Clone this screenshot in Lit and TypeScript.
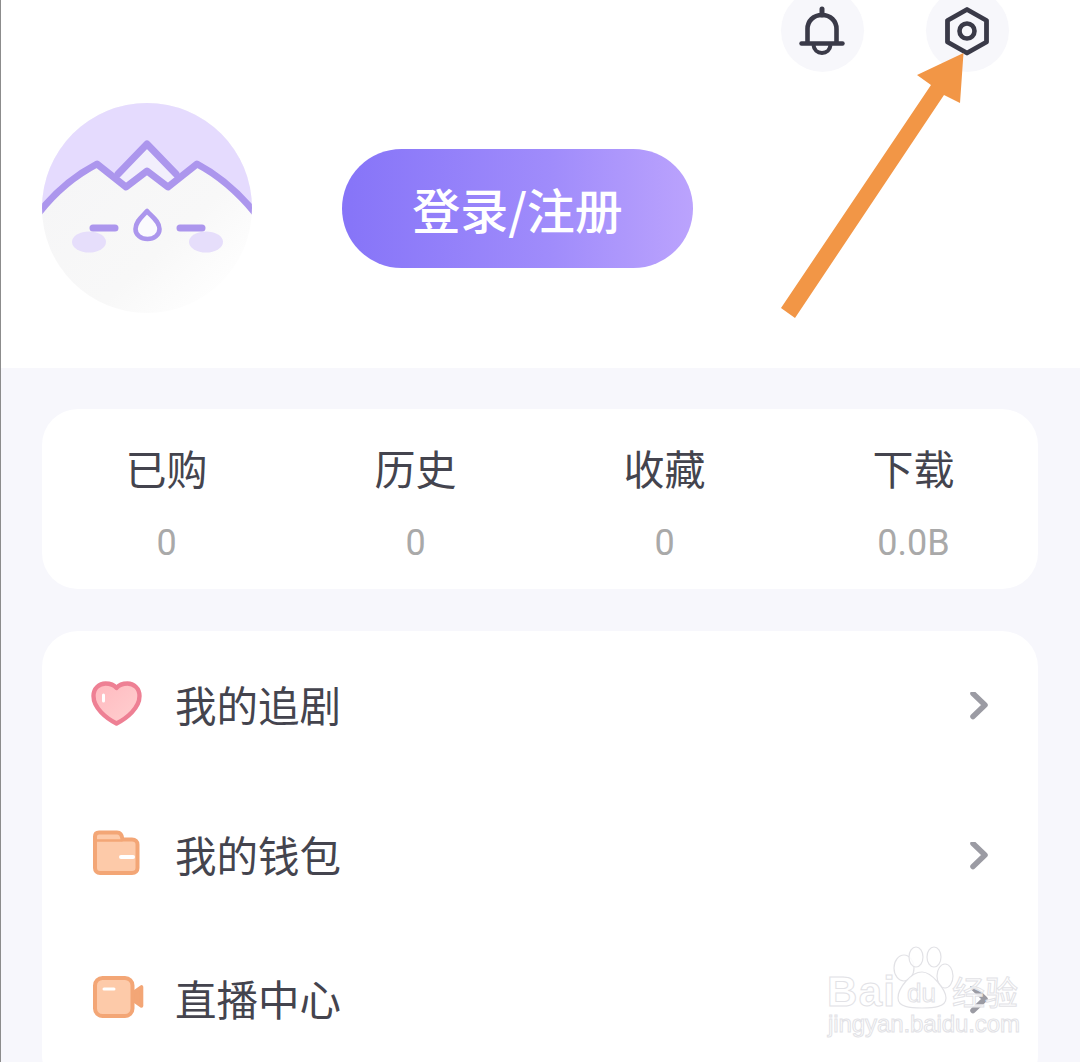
import { LitElement, html, css, svg } from "lit";
import { customElement } from "lit/decorators.js";

const stats = [
  { label: "已购", value: "0" },
  { label: "历史", value: "0" },
  { label: "收藏", value: "0" },
  { label: "下载", value: "0.0B" },
];

const heart = svg`<svg class="ic" viewBox="88 677 60 60">
  <defs>
    <linearGradient id="hg" x1="0" y1="0" x2="1" y2="1">
      <stop offset="0" stop-color="#ffb9bf"/>
      <stop offset="1" stop-color="#ffd0d0"/>
    </linearGradient>
  </defs>
  <path d="M116.500 723.500C106 718 93.500 708 93.500 696C93.500 688 99.500 683.500 105.500 683.500C110.500 683.500 114.500 685.500 116.500 688C118.500 685.500 122.500 683.500 127.500 683.500C133.500 683.500 139.500 688 139.500 696C139.500 708 127 718 116.500 723.500Z" fill="url(#hg)" stroke="#ee8094" stroke-width="4.400" stroke-linejoin="round"/>
  <path d="M103.500 695V701" stroke="#fff" stroke-width="3" stroke-linecap="round" fill="none"/>
</svg>`;

const wallet = svg`<svg class="ic" viewBox="88 827 60 60">
  <path d="M95 868V836.500C95 834 96.500 832.500 99 832.500H117C120 832.500 122 834.500 122.500 839.500H132C135.500 839.500 137.500 841.500 137.500 844.500V868C137.500 871 135.500 873 132 873H100C97 873 95 871 95 868Z" fill="#fdcaa9" stroke="#f3a676" stroke-width="4" stroke-linejoin="round"/>
  <path d="M95 840.500H122.500" stroke="#f3a676" stroke-width="2.500" fill="none"/>
  <path d="M121 857H133" stroke="#fff" stroke-width="4" stroke-linecap="round" fill="none"/>
</svg>`;

const video = svg`<svg class="ic" viewBox="88 971 60 60">
  <path d="M133 993L141.500 987V1006L133 1000Z" fill="#f3a676" stroke="#f3a676" stroke-width="3.600" stroke-linejoin="round"/>
  <rect x="95" y="978" width="37.500" height="38" rx="7.500" fill="#fdcaa9" stroke="#f3a676" stroke-width="4"/>
  <path d="M104 989H114" stroke="#fff" stroke-width="3" stroke-linecap="round" fill="none"/>
</svg>`;

const rows = [
  { label: "我的追剧", icon: heart },
  { label: "我的钱包", icon: wallet },
  { label: "直播中心", icon: video },
];

@customElement("app-root")
export class AppRoot extends LitElement {
  static styles = css`
    :host {
      display: block;
      position: relative;
      width: 1080px;
      height: 1062px;
      overflow: hidden;
      background: #f7f7fc;
      font-family: "Noto Sans CJK SC", "Noto Sans", sans-serif;
      color: #44444e;
    }
    .edge {
      position: absolute;
      left: 0;
      top: 0;
      bottom: 0;
      width: 1px;
      background: #8c8c8c;
    }
    .header {
      height: 368px;
      background: #fff;
      overflow: hidden;
    }
    .actions {
      display: flex;
      justify-content: flex-end;
      gap: 62px;
      padding-right: 71px;
      margin-top: -11px;
    }
    .circle {
      width: 83px;
      height: 83px;
      border-radius: 50%;
      background: #f7f7fb;
      display: flex;
      align-items: center;
      justify-content: center;
    }
    .circle svg {
      width: 60px;
      height: 60px;
    }
    .hero {
      display: flex;
      align-items: center;
      gap: 90px;
      padding-left: 42px;
      margin-top: 31px;
    }
    .avatar {
      width: 210px;
      height: 210px;
      flex: none;
    }
    .login {
      width: 351px;
      height: 119px;
      border-radius: 60px;
      background: linear-gradient(90deg, #8674f8 0%, #a08cfb 60%, #bba3fd 100%);
      color: #fff;
      font-size: 48px;
      font-weight: 500;
      line-height: 119px;
      text-align: center;
      margin-top: 1px;
    }
    .stats {
      margin: 41px 42px 0;
      height: 180px;
      background: #fff;
      border-radius: 36px;
      display: grid;
      grid-template-columns: repeat(4, 1fr);
    }
    .stat {
      display: flex;
      flex-direction: column;
      align-items: center;
    }
    .stat-label {
      font-size: 41px;
      line-height: 60px;
      margin-top: 28px;
    }
    .stat-value {
      font-family: Roboto, "Liberation Sans", sans-serif;
      font-size: 36px;
      line-height: 44px;
      color: #a9a9a9;
      margin-top: 24px;
    }
    .menu {
      margin: 42px 42px 0;
      background: #fff;
      border-radius: 36px;
      height: 460px;
    }
    .row {
      display: flex;
      align-items: center;
      padding: 0 49px 0 46px;
    }
    .row:nth-child(1) { height: 152px; }
    .row:nth-child(2) { height: 148px; }
    .row:nth-child(3) { height: 140px; }
    .ic {
      width: 60px;
      height: 60px;
      flex: none;
      overflow: visible;
    }
    .row-label {
      flex: 1;
      margin: 0 0 6px 27px;
      font-size: 41.500px;
      line-height: 60px;
    }
    .chev {
      width: 20px;
      height: 30px;
      flex: none;
    }
    .arrow {
      position: absolute;
      left: 770px;
      top: 40px;
      width: 210px;
      height: 290px;
    }
    .wm {
      position: absolute;
      left: 820px;
      top: 940px;
      width: 210px;
      height: 105px;
    }
    .wm text {
      fill: #fff;
      fill-opacity: 0.85;
      stroke: #e2e2e6;
      stroke-width: 1;
    }
    .wm .lat {
      font-family: "Liberation Sans", sans-serif;
    }
  `;

  render() {
    return html`
      <div class="edge"></div>
      <section class="header">
        <div class="actions">
          <div class="circle">
            <svg viewBox="792.500 1 60 60">
              <path d="M807 43V29C807 21 813 15 821.500 15C830 15 836 21 836 29V43" fill="none" stroke="#3a3a48" stroke-width="4.600"/>
              <path d="M801 43.500H842" fill="none" stroke="#3a3a48" stroke-width="4.400" stroke-linecap="round"/>
              <path d="M813 45C813.500 50 817 53 821.500 53C826 53 829.500 50 830 45" fill="none" stroke="#3a3a48" stroke-width="4"/>
              <path d="M821.500 9V15" stroke="#3a3a48" stroke-width="5" stroke-linecap="round" fill="none"/>
            </svg>
          </div>
          <div class="circle">
            <svg viewBox="937.500 1 60 60">
              <path d="M966.500 9.500L986 20.500V42L966.500 53L947 42V20.500Z" fill="none" stroke="#3a3a48" stroke-width="4.800" stroke-linejoin="round"/>
              <circle cx="966.500" cy="31" r="7.500" fill="none" stroke="#3a3a48" stroke-width="4.600"/>
            </svg>
          </div>
        </div>
        <div class="hero">
          <svg class="avatar" viewBox="42 103 210 210">
            <defs>
              <clipPath id="disc"><circle cx="147" cy="208" r="105"/></clipPath>
              <linearGradient id="face" x1="0.150" y1="0.300" x2="0.800" y2="1">
                <stop offset="0" stop-color="#f6f6f7"/>
                <stop offset="0.600" stop-color="#f8f8f8"/>
                <stop offset="1" stop-color="#ffffff"/>
              </linearGradient>
            </defs>
            <g clip-path="url(#disc)">
              <rect x="42" y="103" width="210" height="210" fill="url(#face)"/>
              <path d="M38 214C55 192 76 175 97 164L126 187L147 171L168 187L197 164C218 175 238 192 256 214V100H38Z" fill="#e5dbfe"/>
              <path d="M120 178L147 146L175 178L168 187L147 171L126 187Z" fill="#f2effc"/>
              <path d="M38 214C55 192 76 175 97 164L126 187L147 171L168 187L197 164C218 175 238 192 256 214" fill="none" stroke="#ac96ed" stroke-width="7" stroke-linejoin="round"/>
              <path d="M118 174L147 144L176 174" fill="none" stroke="#ac96ed" stroke-width="7" stroke-linejoin="round" stroke-linecap="round"/>
              <ellipse cx="89" cy="242" rx="17" ry="10.500" fill="#e6defb"/>
              <ellipse cx="206" cy="242" rx="17" ry="10.500" fill="#e6defb"/>
              <path d="M93 228H115M180 228H202" stroke="#ac96ed" stroke-width="7" stroke-linecap="round" fill="none"/>
              <path d="M147 211C143 216 135.500 221 135.500 229C135.500 235 141 239 147.500 239C154 239 159.500 235 159.500 229C159.500 221 151 216 147 211Z" fill="#fbfafe" stroke="#ac96ed" stroke-width="4.600" stroke-linejoin="round"/>
            </g>
          </svg>
          <div class="login">登录/注册</div>
        </div>
      </section>

      <section class="stats">
        ${stats.map(
          (s) => html`<div class="stat">
            <div class="stat-label">${s.label}</div>
            <div class="stat-value">${s.value}</div>
          </div>`
        )}
      </section>

      <section class="menu">
        ${rows.map(
          (r) => html`<div class="row">
            ${r.icon}
            <div class="row-label">${r.label}</div>
            <svg class="chev" viewBox="969 692 20 30">
              <path d="M973 693.500L985 705L973 716.500" fill="none" stroke="#9b9ba3" stroke-width="5.500" stroke-linecap="round" stroke-linejoin="round"/>
            </svg>
          </div>`
        )}
      </section>

      <svg class="arrow" viewBox="770 40 210 290">
        <path d="M963.500 53L917 75L931 85L781 308L795 318L944 95L960 103Z" fill="#f29646"/>
      </svg>

      <svg class="wm" viewBox="820 940 210 105">
        <g fill="#fff" fill-opacity="0.85" stroke="#e2e2e6" stroke-width="1.200">
          <ellipse cx="904" cy="968" rx="10" ry="13"/>
          <ellipse cx="916" cy="957" rx="7" ry="10"/>
          <ellipse cx="934" cy="957" rx="7" ry="10"/>
          <ellipse cx="945" cy="976" rx="8" ry="12"/>
          <path d="M922 972C932 972 946 990 946 998C946 1007 934 1008 922 1008C910 1008 898 1007 898 998C898 988 911 972 922 972Z"/>
        </g>
        <text class="lat" x="827" y="1006" font-size="42" font-weight="700" textLength="68">Bai</text>
        <text class="lat" x="907" y="1002" font-size="26">du</text>
        <text x="952" y="1005" font-size="33" textLength="66">经验</text>
        <text class="lat" x="828" y="1032" font-size="24" textLength="192">jingyan.baidu.com</text>
      </svg>
    `;
  }
}
